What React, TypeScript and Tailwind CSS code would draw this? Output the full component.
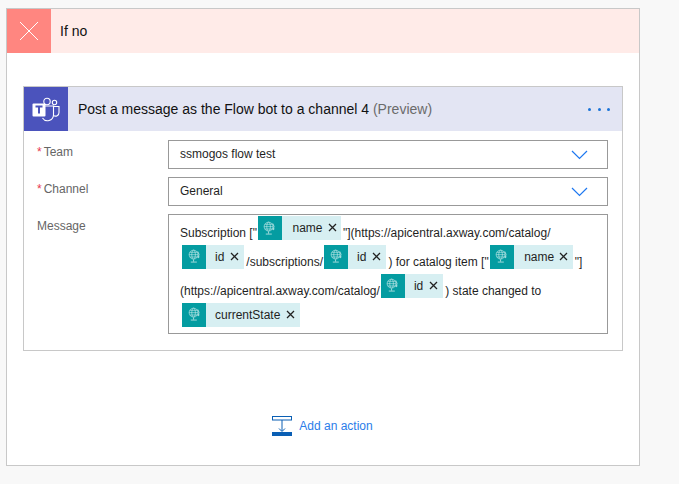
function GlobeIcon() {
    return (
        <svg width="13" height="15" viewBox="0 0 14 16" fill="none" stroke="#d5f0f0" strokeWidth="0.6">
            <circle cx="6" cy="6" r="4.800" />
            <ellipse cx="6" cy="6" rx="2" ry="4.800" />
            <path d="M1.200 6h9.600M1.900 3.500h8.200M1.900 8.500h8.200" />
            <path d="M10.500 2.500a6 6 0 0 1 .6 6.500M12.400 8.400l-1.300 1-1-1.300M6 11.500v2M3 14h6.500" strokeWidth="0.8" />
        </svg>
    )
}

function Token({ label, lineStart, wide }: { label: string; lineStart?: boolean; wide?: boolean }) {
    return (
        <span className={lineStart ? "inline-flex items-center h-6 ml-[2px] mr-[2px] align-[1px] bg-[#d7eff2]" : "inline-flex items-center h-6 ml-px mr-[2px] align-[1px] bg-[#d7eff2]"}>
            <span className="flex items-center justify-center w-6 h-6 bg-[#049ca1]">
                <GlobeIcon />
            </span>
            <span className={wide ? "pl-[10.500px] text-[#1f1f1f]" : "pl-[9px] text-[#1f1f1f]"}>{label}</span>
            <svg className={wide ? "ml-[5px] mr-[4.500px] -mt-px" : "ml-[6px] mr-[5px] -mt-px"} width="9" height="9" viewBox="0 0 9 9" stroke="#222" strokeWidth="1.300">
                <path d="M1 1l7 7M8 1l-7 7" />
            </svg>
        </span>
    )
}

function TeamsIcon() {
    return (
        <svg width="28" height="26" viewBox="0 0 28 26" fill="none">
            <circle cx="15" cy="5.500" r="3.200" stroke="#fff" strokeWidth="1.100" />
            <circle cx="22.500" cy="6.500" r="2.200" stroke="#fff" strokeWidth="1.100" />
            <path d="M10 10h11.500v9a6 6 0 0 1-11 3" stroke="#fff" strokeWidth="1.100" />
            <path d="M21.500 10.500h5.500v6a3.500 3.500 0 0 1-5.500 3" stroke="#fff" strokeWidth="1.100" />
            <rect x="0.500" y="7.500" width="13" height="13" rx="1" fill="#fff" />
            <path d="M3.500 10.500h7M7 10.500v7" stroke="#4b53bc" strokeWidth="2" />
        </svg>
    )
}

function SelectField({ label, value }: { label: string; value: string }) {
    return (
        <div className="flex">
            <div className="w-[144px] pl-[13px] pt-[4px] text-[#666]">
                <span className="text-[#e8384f] mr-[2px]">*</span>
                {label}
            </div>
            <div className="flex items-center justify-between w-[440px] h-[29px] pl-[11px] pr-[19px] pb-px border border-[#999] text-[#1f1f1f]">
                <span>{value}</span>
                <svg className="mt-[2px]" width="17" height="10" viewBox="0 0 17 10" fill="none" stroke="#1e78f0" strokeWidth="1.200">
                    <path d="M1 1l7.500 7.500L16 1" />
                </svg>
            </div>
        </div>
    )
}

export default function App() {
    return (
        <div className="w-[679px] h-[484px] pt-2 pl-[6px] bg-[#f8f8f8] font-['Liberation_Sans',sans-serif] text-xs">
            <div className="w-[634px] h-[458px] bg-white border border-[#c8c8c8]">
                {/* If no header */}
                <div className="flex items-center h-11 bg-[#ffebe8]">
                    <div className="flex items-center justify-center w-11 h-11 bg-[#ff8680]">
                        <svg width="20" height="20" viewBox="0 0 20 20" stroke="#fff" strokeWidth="1">
                            <path d="M1 1l18 18M19 1L1 19" />
                        </svg>
                    </div>
                    <span className="ml-[9px] text-sm text-[#111]">If no</span>
                </div>

                {/* Action card */}
                <div className="w-[600px] h-[265px] mt-[33px] ml-4 border border-[#c8c8c8]">
                    <div className="flex items-center h-11 bg-[#e3e5f3]">
                        <div className="flex items-center justify-center w-11 h-11 bg-[#4b53bc]">
                            <TeamsIcon />
                        </div>
                        <span className="ml-[10px] text-sm text-[#111]">
                            Post a message as the Flow bot to a channel 4 <span className="text-[#6b6b6b]">(Preview)</span>
                        </span>
                        <div className="flex items-center gap-[6.500px] ml-auto mr-[12px]">
                            <span className="w-[3px] h-[3px] rounded-full bg-[#1a73d8]" />
                            <span className="w-[3px] h-[3px] rounded-full bg-[#1a73d8]" />
                            <span className="w-[3px] h-[3px] rounded-full bg-[#1a73d8]" />
                        </div>
                    </div>

                    <div className="flex flex-col gap-2 pt-[9px]">
                        <SelectField label="Team" value="ssmogos flow test" />
                        <SelectField label="Channel" value="General" />
                        <div className="flex">
                            <div className="w-[144px] pl-[13px] pt-[4px] text-[#666]">Message</div>
                            <div className="w-[440px] h-[120px] pl-[11px] pr-2 pt-px border border-[#999] leading-[24.400px] text-[#1f1f1f]">
                                Subscription ["<Token label="name" wide />"](https://apicentral.axway.com/catalog/
                                <Token label="id" lineStart />/subscriptions/<Token label="id" />) for catalog item ["<Token label="name" wide />"]
                                (https://apicentral.axway.com/catalog/<Token label="id" />) state changed to
                                <Token label="currentState" lineStart />
                            </div>
                        </div>
                    </div>
                </div>

                {/* Add an action */}
                <div className="flex items-center justify-center gap-[7px] mt-[65px] pr-[1px]">
                    <svg width="20" height="20" viewBox="0 0 20 20" fill="none" stroke="#0a5fb4">
                        <rect x="0.500" y="0.500" width="19" height="3.500" />
                        <path d="M10 4v11M7 12.500l3 3 3-3" />
                        <rect x="0" y="16" width="20" height="4" fill="#0a5fb4" stroke="none" />
                    </svg>
                    <span className="text-[#2b7de9]">Add an action</span>
                </div>
            </div>
        </div>
    )
}
